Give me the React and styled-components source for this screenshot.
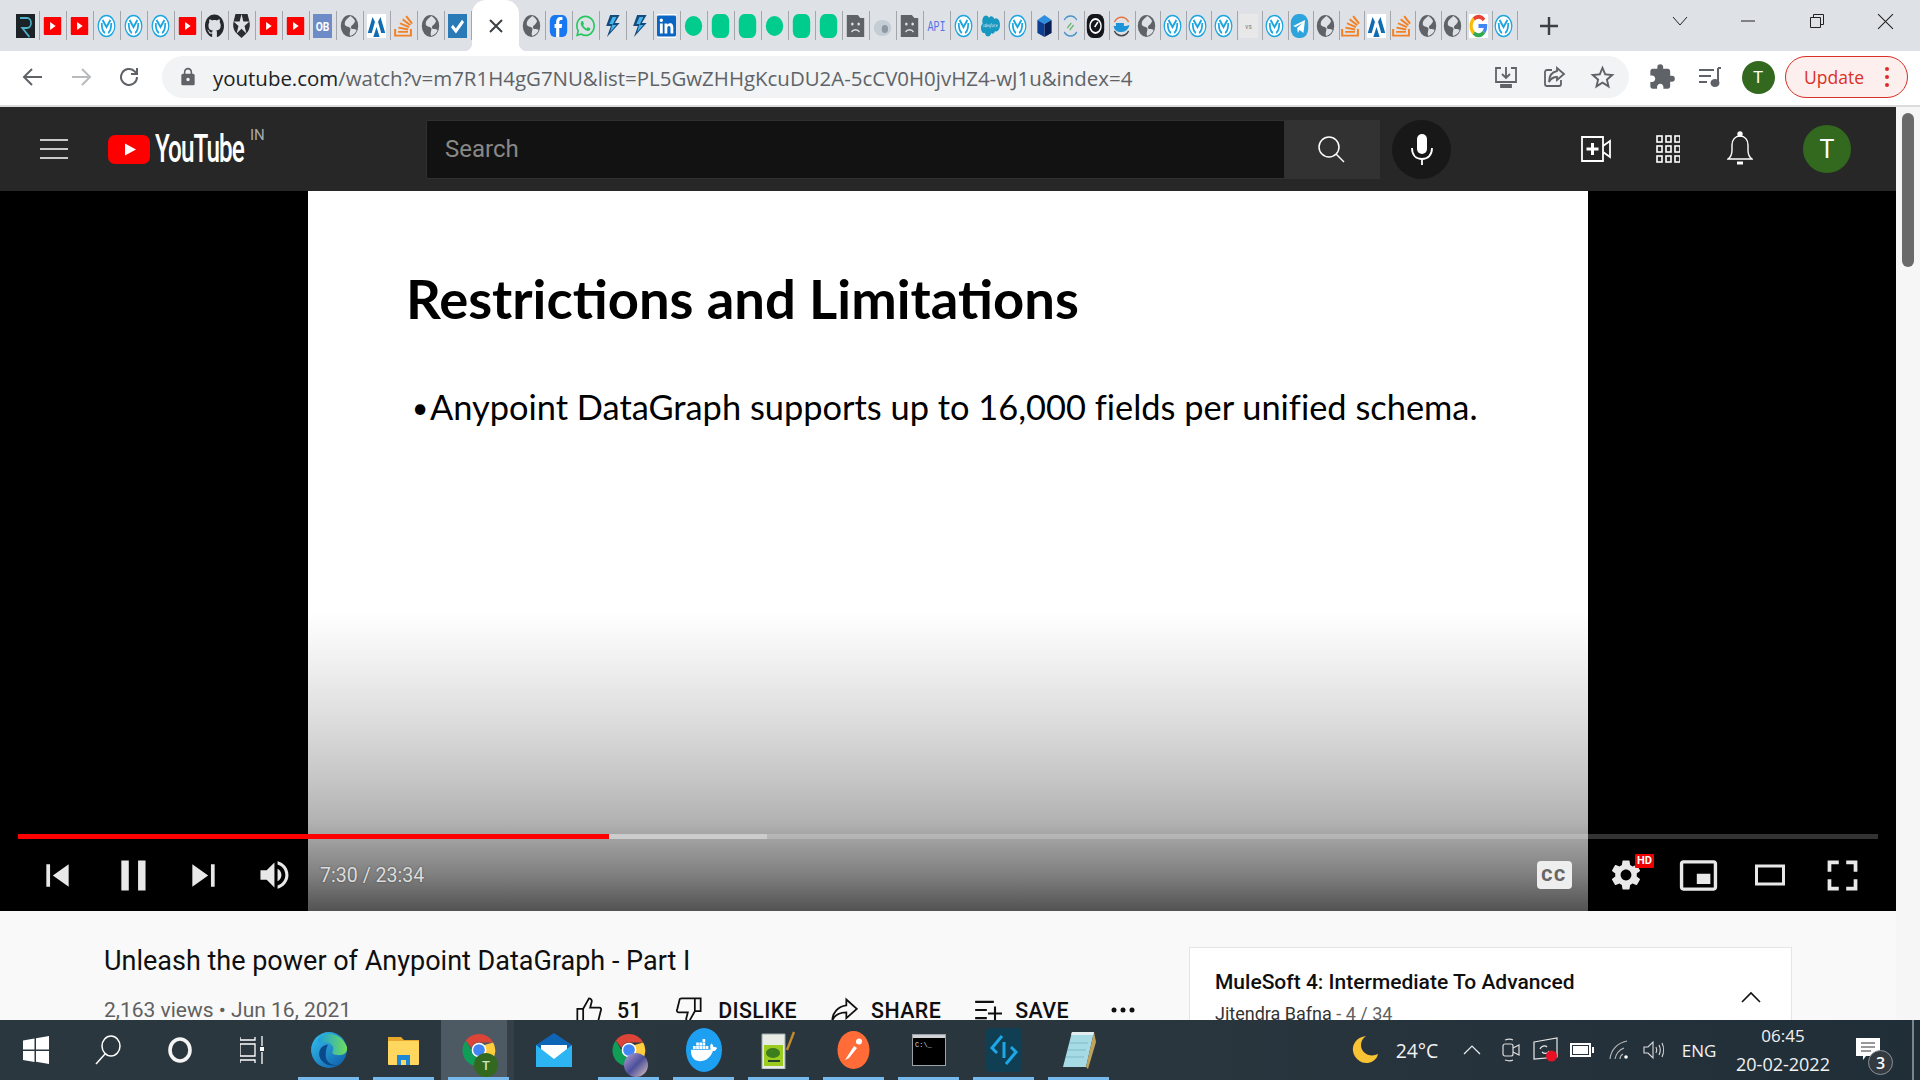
import React from "react";
import styled, { createGlobalStyle } from "styled-components";
import {
  FaGithub,
  FaWhatsapp,
  FaLinkedin,
  FaStackOverflow,
  FaSalesforce,
  FaDocker,
} from "react-icons/fa";
import { SiAuth0 } from "react-icons/si";
import { MdSettings, MdExtension, MdOutlineStarBorder, MdLock } from "react-icons/md";

const GlobalStyle = createGlobalStyle`
  html, body {
    margin: 0;
    padding: 0;
    width: 1920px;
    height: 1080px;
    overflow: hidden;
    font-family: Roboto, "Liberation Sans", sans-serif;
  }
  * { box-sizing: border-box; }
`;

const Page = styled.div`
  width: 1920px;
  height: 1080px;
  display: flex;
  flex-direction: column;
  overflow: hidden;
  background: #f9f9f9;
`;

/* ---- chrome tab strip ---- */
const TabStrip = styled.div`
  height: 51px;
  flex: none;
  display: flex;
  align-items: center;
  padding-left: 13px;
  background: #dee1e6;
`;
const Tab = styled.div`
  width: ${(p) => p.$w}px;
  height: 29px;
  flex: none;
  display: flex;
  align-items: center;
  justify-content: center;
  padding-right: 2px;
  border-right: 1px solid #a3a6aa;
`;
const ActiveTab = styled.div`
  position: relative;
  width: 47px;
  height: 51px;
  flex: none;
  display: flex;
  align-items: center;
  justify-content: center;
  background: #fff;
  border-radius: 14px 14px 0 0;
  color: #3c4043;
  &::before,
  &::after {
    content: "";
    position: absolute;
    bottom: 0;
    width: 8px;
    height: 8px;
  }
  &::before {
    left: -8px;
    background: radial-gradient(circle at 0 0, transparent 8px, #fff 8.5px);
  }
  &::after {
    right: -8px;
    background: radial-gradient(circle at 100% 0, transparent 8px, #fff 8.5px);
  }
`;
const Slot = styled.div`
  width: ${(p) => p.$w}px;
  height: ${(p) => (p.$h ? `${p.$h}px` : "100%")};
  flex: none;
  display: flex;
  align-items: center;
  justify-content: center;
  position: relative;
  margin-left: ${(p) => p.$ml || 0}px;
  color: ${(p) => p.$color || "inherit"};
`;
const WindowControls = styled.div`
  margin-left: auto;
  height: 100%;
  display: flex;
  padding-bottom: 9px;
`;

/* ---- chrome toolbar ---- */
const Toolbar = styled.div`
  height: 56px;
  flex: none;
  display: flex;
  align-items: center;
  padding: 0 12px 2px 9px;
  background: #fff;
  border-bottom: 2px solid #dcdcdc;
  color: #5f6368;
`;
const Omnibox = styled.div`
  width: 1467px;
  height: 42px;
  margin-left: 9px;
  flex: none;
  display: flex;
  align-items: center;
  padding: 0 3px 0 14px;
  border-radius: 21px;
  background: #f1f3f4;
`;
const Url = styled.div`
  flex: 1;
  margin-left: 13px;
  padding-top: 1px;
  font-family: "Open Sans", "Noto Sans", sans-serif;
  font-size: 20.45px;
  white-space: nowrap;
  color: #5f6368;
  b {
    font-weight: 400;
    color: #202124;
  }
`;
const ProfileDot = styled.div`
  width: 33px;
  height: 33px;
  border-radius: 50%;
  background: #33691e;
  color: #fff;
  font-size: 17px;
  display: flex;
  align-items: center;
  justify-content: center;
`;
const UpdatePill = styled.div`
  width: 123px;
  height: 42px;
  margin-left: 3px;
  flex: none;
  display: flex;
  align-items: center;
  padding-left: 18px;
  border: 1.5px solid #d93025;
  border-radius: 21px;
  background: #fcefee;
  color: #d93025;
  font-family: "Open Sans", sans-serif;
  font-size: 17.5px;
`;
const PillDots = styled.div`
  margin-left: auto;
  margin-right: 18px;
  display: flex;
  flex-direction: column;
  gap: 4px;
  i {
    width: 4px;
    height: 4px;
    border-radius: 50%;
    background: #d93025;
  }
`;

/* ---- page viewport ---- */
const Viewport = styled.div`
  flex: 1;
  min-height: 0;
  display: flex;
`;
const Content = styled.div`
  width: 1896px;
  flex: none;
  display: flex;
  flex-direction: column;
`;
const Scrollbar = styled.div`
  flex: 1;
  padding: 6px 6px 0;
  background: #f6f6f6;
  &::before {
    content: "";
    display: block;
    width: 12px;
    height: 154px;
    border-radius: 6px;
    background: #6a6a6a;
  }
`;

/* ---- youtube masthead ---- */
const Masthead = styled.div`
  height: 84px;
  flex: none;
  display: flex;
  align-items: center;
  padding: 0 45px 0 30px;
  background: #272727;
  color: #fff;
`;
const Logo = styled.div`
  width: 318px;
  margin-left: 30px;
  flex: none;
  display: flex;
  align-items: center;
  position: relative;
`;
const LogoWord = styled.span`
  margin-left: 5px;
  font-size: 38px;
  font-weight: 500;
  letter-spacing: -1.5px;
  line-height: 30px;
  transform: scaleX(0.64);
  transform-origin: left center;
`;
const Region = styled.span`
  position: absolute;
  left: 142px;
  top: -8px;
  font-size: 15px;
  color: #aaa;
`;
const SearchBox = styled.div`
  width: 859px;
  height: 59px;
  flex: none;
  display: flex;
  align-items: center;
  padding-left: 18px;
  background: #121212;
  border: 1px solid #303030;
  border-radius: 2px 0 0 2px;
  color: #888;
  font-size: 24px;
`;
const SearchButton = styled.div`
  width: 95px;
  height: 59px;
  flex: none;
  display: flex;
  align-items: center;
  justify-content: center;
  padding-right: 4px;
  background: #323232;
`;
const MicButton = styled.div`
  width: 59px;
  height: 59px;
  margin-left: 12px;
  flex: none;
  display: flex;
  align-items: center;
  justify-content: center;
  border-radius: 50%;
  background: #181818;
`;
const MastheadRight = styled.div`
  margin-left: auto;
  height: 100%;
  display: flex;
  align-items: center;
`;
const Avatar = styled.div`
  width: 48px;
  height: 48px;
  margin-left: 27px;
  border-radius: 50%;
  background: #33691e;
  font-size: 25px;
  display: flex;
  align-items: center;
  justify-content: center;
`;

/* ---- video ---- */
const VideoFrame = styled.div`
  position: relative;
  height: 720px;
  flex: none;
  padding-left: 308px;
  background: #000;
`;
const Slide = styled.div`
  width: 1280px;
  height: 100%;
  padding: 77px 0 0 98px;
  background: #fff;
  color: #000;
  font-family: Lato, "Open Sans", sans-serif;
`;
const SlideTitle = styled.h1`
  margin: 0;
  font-size: 54.4px;
  line-height: 60px;
  font-weight: 700;
`;
const SlideBullet = styled.p`
  margin: 56px 0 0;
  display: flex;
  align-items: center;
  padding-left: 6px;
  font-size: 34.4px;
  line-height: 46px;
  white-space: nowrap;
  font-variant-ligatures: none;
  span {
    width: 18px;
    font-size: 28px;
  }
`;
const PlayerChrome = styled.div`
  position: absolute;
  left: 0;
  right: 0;
  bottom: 0;
  height: 300px;
  display: flex;
  flex-direction: column;
  justify-content: flex-end;
  background: linear-gradient(
    to bottom,
    rgba(0, 0, 0, 0) 0,
    rgba(0, 0, 0, 0.05) 15%,
    rgba(0, 0, 0, 0.13) 35%,
    rgba(0, 0, 0, 0.22) 55%,
    rgba(0, 0, 0, 0.3) 70%,
    rgba(0, 0, 0, 0.5) 88%,
    rgba(0, 0, 0, 0.68) 100%
  );
`;
const ProgressTrack = styled.div`
  position: relative;
  height: 5px;
  margin: 0 18px;
  background: rgba(255, 255, 255, 0.2);
`;
const ProgressFill = styled.div`
  position: absolute;
  left: 0;
  top: 0;
  bottom: 0;
  background: ${(p) => p.$color};
`;
const Controls = styled.div`
  height: 72px;
  padding: 0 18px;
  display: flex;
  align-items: center;
  color: #e8e8e8;
`;
const TimeLabel = styled.span`
  margin-left: 10px;
  font-size: 19.6px;
  color: #ddd;
  text-shadow: 0 0 2px rgba(0, 0, 0, 0.5);
`;
const ControlsRight = styled.div`
  margin-left: auto;
  height: 100%;
  display: flex;
`;
const CcBox = styled.div`
  width: 35px;
  height: 28px;
  border-radius: 4px;
  background: #eee;
  color: #666;
  font-size: 17px;
  font-weight: 900;
  letter-spacing: 1.5px;
  display: flex;
  align-items: center;
  justify-content: center;
`;
const HdBadge = styled.span`
  position: absolute;
  top: 15px;
  left: 45px;
  padding: 0 2px;
  height: 14px;
  line-height: 14px;
  border-radius: 1px;
  background: #e00;
  color: #fff;
  font-size: 11px;
  font-weight: 700;
`;
const VolumeWrap = styled.span`
  display: flex;
  margin-left: 4px;
`;

/* ---- under the video ---- */
const Below = styled.div`
  flex: 1;
  min-height: 0;
  overflow: hidden;
  display: flex;
  background: #f9f9f9;
`;
const Primary = styled.div`
  width: 1189px;
  flex: none;
  padding: 36px 0 0 104px;
`;
const VideoTitle = styled.div`
  font-size: 27px;
  line-height: 28px;
  color: #0f0f0f;
`;
const MetaRow = styled.div`
  margin-top: 21px;
  display: flex;
  align-items: center;
  height: 28px;
`;
const Views = styled.div`
  width: 471px;
  flex: none;
  font-size: 21px;
  color: #606060;
`;
const Actions = styled.div`
  display: flex;
  align-items: center;
  gap: 33px;
  color: #0f0f0f;
`;
const ActionButton = styled.div`
  display: flex;
  align-items: center;
  gap: ${(p) => p.$gap || 13}px;
  font-size: 21.4px;
  font-weight: 500;
  letter-spacing: 0.4px;
  white-space: nowrap;
`;
const PlaylistCard = styled.div`
  width: 603px;
  height: 120px;
  margin-top: 36px;
  padding: 21px 25px;
  position: relative;
  background: #fff;
  border: 1px solid #e5e5e5;
`;
const PlaylistTitle = styled.div`
  font-size: 21px;
  font-weight: 500;
  line-height: 26px;
  color: #0f0f0f;
`;
const PlaylistSub = styled.div`
  margin-top: 7px;
  font-size: 18px;
  line-height: 24px;
  color: #333;
  span {
    color: #606060;
  }
`;
const Collapse = styled.div`
  position: absolute;
  top: 40px;
  left: 551px;
  color: #111;
`;

/* ---- windows taskbar ---- */
const Taskbar = styled.div`
  height: 60px;
  flex: none;
  display: flex;
  align-items: center;
  background: linear-gradient(90deg, #2b373f 0%, #2a363e 60%, #202e38 100%);
  color: #fff;
`;
const Pinned = styled.div`
  display: flex;
  height: 100%;
  margin-left: 3px;
`;
const PinnedSlot = styled.div`
  width: 75px;
  height: 100%;
  flex: none;
  display: flex;
  align-items: center;
  justify-content: center;
  position: relative;
  background: ${(p) =>
    p.$current ? "linear-gradient(90deg, #4d5a63 0 66px, #363f46 66px 73px, transparent 73px)" : "transparent"};
  &::after {
    content: "";
    position: absolute;
    left: 7px;
    bottom: 0;
    width: 61px;
    height: 3px;
    background: ${(p) => (p.$open ? "#76b9ed" : "transparent")};
  }
`;
const Tray = styled.div`
  margin-left: auto;
  height: 100%;
  display: flex;
  align-items: center;
`;
const TrayText = styled.span`
  font-family: "Open Sans", sans-serif;
  font-size: ${(p) => p.$size || 17}px;
  color: #f2f2f2;
  white-space: nowrap;
`;
const Clock = styled.div`
  display: flex;
  flex-direction: column;
  align-items: center;
  gap: 4px;
  line-height: 24px;
`;
const NotifyBadge = styled.span`
  position: absolute;
  left: 29px;
  top: 30px;
  width: 25px;
  height: 25px;
  border-radius: 50%;
  background: #333a40;
  border: 1px solid #8a9197;
  color: #fff;
  font-family: "Open Sans", sans-serif;
  font-size: 16px;
  font-weight: 600;
  display: flex;
  align-items: center;
  justify-content: center;
`;
const TrayEnd = styled.div`
  width: 19px;
  height: 100%;
  &::after {
    content: "";
    display: block;
    width: 2px;
    height: 100%;
    margin-left: 11px;
    background: #7b858c;
  }
`;

/* ---- favicons, all squeezed like the small tab icons in the capture ---- */
const Fav = ({ children }) => (
  <svg width="19" height="24" viewBox="0 0 24 24" preserveAspectRatio="none">
    {children}
  </svg>
);
const Brand = ({ icon: I, color, bg }) => (
  <I
    size={20}
    color={color}
    style={bg ? { background: bg, width: 19, height: 24 } : { width: 19, height: 24 }}
    preserveAspectRatio="none"
  />
);

function Favicon({ type }) {
  switch (type) {
    case "r":
      return (
        <Fav>
          <rect width="24" height="24" fill="#1b2326" />
          <path d="M5 4h9a5 5 0 010 10H8l9 9M5 4v0" fill="none" stroke="#4fb2c9" strokeWidth="2" />
        </Fav>
      );
    case "yt":
      return (
        <Fav>
          <rect x="1" y="3" width="22" height="18" rx="1" fill="#f00" />
          <path d="M9 8l7 4-7 4z" fill="#fff" />
        </Fav>
      );
    case "mule":
      return (
        <Fav>
          <circle cx="12" cy="12" r="10.5" fill="#fff" stroke="#1ea6e0" strokeWidth="1.6" />
          <path d="M6 9c0 6 2 9 4 10M18 9c0 6-2 9-4 10M7 6l5 7 5-7" fill="none" stroke="#1ea6e0" strokeWidth="2.2" />
        </Fav>
      );
    case "gh":
      return <Brand icon={FaGithub} color="#24292e" />;
    case "auth0":
      return <Brand icon={SiAuth0} color="#2b2b33" />;
    case "ob":
      return (
        <Fav>
          <rect width="24" height="24" fill="#6d8cc7" />
          <text x="12" y="17" fontSize="13" fontWeight="700" fill="#fff" textAnchor="middle" fontFamily="Roboto">OB</text>
        </Fav>
      );
    case "globe":
      return (
        <Fav>
          <circle cx="12" cy="12" r="11" fill="#5f6368" />
          <path d="M13 2c-4 3-7 4-7 8 0 3 5 2 7 4 1 2-2 5 0 8 4-1 7-3 8-6-3-2-6 0-7-2-1-3 4-3 5-7-2-3-4-4-6-5z" fill="#dee1e6" />
        </Fav>
      );
    case "mt":
      return (
        <Fav>
          <rect width="24" height="24" fill="#fff" />
          <path d="M1 19L7 3l5 8 5-8 6 16h-5L14 8l-2 3-2-3-4 11z" fill="#0f6cb3" />
          <path d="M12 13l4 10H8z" fill="#0f6cb3" />
        </Fav>
      );
    case "so":
      return <Brand icon={FaStackOverflow} color="#f48024" />;
    case "check":
      return (
        <Fav>
          <rect width="24" height="24" fill="#2a7ab8" />
          <path d="M5 12l5 5 9-10" fill="none" stroke="#fff" strokeWidth="3.4" />
        </Fav>
      );
    case "fb":
      return (
        <Fav>
          <rect x="1" y="1" width="22" height="22" rx="6" fill="#1778f2" />
          <path d="M13 23v-9h3l.6-4H13V8c0-1 .5-2 2-2h2V3h-3c-3 0-5 2-5 5v2H7v4h2v9z" fill="#fff" />
        </Fav>
      );
    case "wa":
      return <Brand icon={FaWhatsapp} color="#25c75f" />;
    case "bolt":
      return (
        <Fav>
          <path d="M9 1h12l-6 8h6L5 23l5-11H4z" fill="#16497c" />
          <path d="M12 3h5l-5 8h5L9 18l3-8H8z" fill="#44b4ea" />
        </Fav>
      );
    case "li":
      return <Brand icon={FaLinkedin} color="#0a66c2" bg="#fff" />;
    case "dot":
      return (
        <Fav>
          <ellipse cx="12" cy="12" rx="11" ry="10" fill="#00cc8e" />
        </Fav>
      );
    case "pill":
      return (
        <Fav>
          <rect x="1" y="0" width="22" height="24" rx="7" fill="#00cc8e" />
        </Fav>
      );
    case "sad":
      return (
        <Fav>
          <path d="M1 1h14l3 3h5v19H1z" fill="#5f6368" />
          <circle cx="8" cy="10" r="1.6" fill="#dee1e6" />
          <circle cx="16" cy="10" r="1.6" fill="#dee1e6" />
          <path d="M7 18c2-3 8-3 10 0" stroke="#dee1e6" strokeWidth="1.6" fill="none" />
        </Fav>
      );
    case "img":
      return (
        <Fav>
          <ellipse cx="12" cy="14" rx="11" ry="8" fill="#c4ccd4" />
          <circle cx="15" cy="15" r="4" fill="#8d98a3" />
        </Fav>
      );
    case "api":
      return (
        <Fav>
          <text x="12" y="17" fontSize="14" fontWeight="500" fill="#5577e6" textAnchor="middle" fontFamily="Liberation Mono" textLength="23" lengthAdjust="spacingAndGlyphs">API</text>
        </Fav>
      );
    case "sf":
      return <Brand icon={FaSalesforce} color="#1798c1" />;
    case "cube":
      return (
        <Fav>
          <path d="M3 6l9-5 9 5-9 4z" fill="#2d8fe0" />
          <path d="M3 6l9 4v13l-9-4z" fill="#0b3f94" />
          <path d="M21 6l-9 4v13l9-4z" fill="#0a1e56" />
        </Fav>
      );
    case "s":
      return (
        <Fav>
          <path d="M20 6a10 10 0 00-16 0M4 18a10 10 0 0016 0" fill="none" stroke="#4a93c8" strokeWidth="1.5" />
          <path d="M8 14l5-5M11 16l5-5" stroke="#63b56b" strokeWidth="1.6" />
        </Fav>
      );
    case "gauge":
      return (
        <Fav>
          <rect x="1" y="0" width="22" height="24" rx="8" fill="#14161c" />
          <circle cx="12" cy="12" r="7" fill="none" stroke="#fff" strokeWidth="1.8" />
          <path d="M11 13l4-5" stroke="#fff" strokeWidth="2" />
        </Fav>
      );
    case "docker":
      return (
        <Fav>
          <path d="M3 8a11 11 0 0118 0" fill="none" stroke="#e8743b" strokeWidth="1.6" />
          <path d="M3 17a11 11 0 0018 0" fill="none" stroke="#444" strokeWidth="1.6" />
          <path d="M2 12h16c1 0 3-1 4-1-1 4-5 7-10 7-6 0-9-2-10-6zM5 9h10v3H5z" fill="#1d93d8" />
        </Fav>
      );
    case "vs":
      return (
        <Fav>
          <rect width="24" height="24" fill="#e8e8e8" />
          <text x="12" y="15" fontSize="8" fill="#777" textAnchor="middle" fontFamily="Roboto">vs</text>
        </Fav>
      );
    case "tg":
      return (
        <Fav>
          <rect x="1" y="0" width="22" height="24" rx="9" fill="#2ea4dd" />
          <path d="M4 12l15-6-2 13-5-3-2 3-1-5 7-5-9 4z" fill="#fff" />
        </Fav>
      );
    case "g":
      return (
        <Fav>
          <rect width="24" height="24" fill="#fff" />
          <path d="M19 6a9 9 0 00-13-1" fill="none" stroke="#ea4335" strokeWidth="4" />
          <path d="M6 5a9 9 0 000 14" fill="none" stroke="#fbbc05" strokeWidth="4" />
          <path d="M6 19a9 9 0 0013-1" fill="none" stroke="#34a853" strokeWidth="4" />
          <path d="M12 12h9a9 9 0 01-2 6" fill="none" stroke="#4285f4" strokeWidth="4" />
        </Fav>
      );
    default:
      return null;
  }
}

const leftTabs = "r yt yt mule mule mule yt gh auth0 yt yt ob globe mt so globe check".split(" ");
const wideTabs = "globe fb wa bolt bolt li dot pill pill dot pill pill sad img sad api mule sf mule cube".split(" ");
const narrowTabs = "s gauge docker globe mule mule mule vs mule tg globe so mt so globe globe g mule".split(" ");

/* ---- toolbar and masthead drawings ---- */
const Icon = ({ size = 24, w, h, view = "0 0 24 24", children, stroke, sw = 2, fill = "none" }) => (
  <svg width={w || size} height={h || size} viewBox={view} fill={fill} stroke={stroke} strokeWidth={sw}>
    {children}
  </svg>
);

const YtIcon = ({ size = 67, d }) => (
  <svg width={size} height={size} viewBox="0 0 36 36" fill="currentColor" fillRule="evenodd">
    {[].concat(d).map((p) => (
      <path key={p} d={p} />
    ))}
  </svg>
);

const ytPaths = {
  prev: "m 12,12 h 2 v 12 h -2 z m 3.5,6 8.5,6 V 12 z",
  next: "M 12,24 20.5,18 12,12 V 24 z M 22,12 v 12 h 2 V 12 h -2 z",
  pause: "M 12,26 16,26 16,10 12,10 z M 21,26 25,26 25,10 21,10 z",
  volume:
    "M8,21 L12,21 L17,26 L17,10 L12,15 L8,15 L8,21 Z M19,14 L19,22 C20.48,21.32 21.5,19.77 21.5,18 C21.5,16.26 20.48,14.74 19,14 ZM19,11.29 C21.89,12.15 24,14.83 24,18 C24,21.17 21.89,23.85 19,24.71 L19,26.77 C23.01,25.86 26,22.28 26,18 C26,13.72 23.01,10.14 19,9.23 L19,11.29 Z",
  mini: "M25,17 L17,17 L17,23 L25,23 L25,17 Z M29,25 L29,10.98 C29,9.88 28.1,9 27,9 L9,9 C7.9,9 7,9.88 7,10.98 L7,25 C7,26.1 7.9,27 9,27 L27,27 C28.1,27 29,26.1 29,25 Z M27,25.02 L9,25.02 L9,10.97 L27,10.97 L27,25.02 Z",
  theater: "m 28,11 0,14 -20,0 0,-14 z m -18,2 16,0 0,10 -16,0 0,-10 z",
  full: [
    "m 10,16 2,0 0,-4 4,0 0,-2 L 10,10 z",
    "m 20,10 0,2 4,0 0,4 2,0 L 26,10 z",
    "m 24,24 -4,0 0,2 L 26,26 l 0,-6 -2,0 z",
    "M 12,20 10,20 10,26 l 6,0 0,-2 -4,0 z",
  ],
};

const ChromeLogo = ({ size = 36 }) => (
  <svg width={size} height={size} viewBox="0 0 36 36">
    <path d="M18 1a17 17 0 0115 9H18a8 8 0 00-8 6L4 8a17 17 0 0114-7z" fill="#db4437" />
    <path d="M4 8l7 12a8 8 0 009 6l-6 9A17 17 0 014 8z" fill="#0f9d58" />
    <path d="M33 10a17 17 0 01-19 25l6-9a8 8 0 003-13z" fill="#ffcd40" />
    <circle cx="18" cy="18" r="7" fill="#4285f4" stroke="#fff" strokeWidth="1.6" />
  </svg>
);

const TaskbarBadge = styled.span`
  position: absolute;
  left: 33px;
  top: 33px;
  width: 24px;
  height: 24px;
  border-radius: 50%;
  background: ${(p) => p.$bg};
  color: #cfe3c2;
  font-size: 13px;
  font-weight: 500;
  display: flex;
  align-items: center;
  justify-content: center;
`;

const pinned = [
  {
    key: "edge",
    open: true,
    node: (
      <svg width="38" height="44" viewBox="0 0 36 36">
        <defs>
          <linearGradient id="edgeA" x1="0" y1="0" x2="1" y2="1">
            <stop offset="0" stopColor="#35c1f1" />
            <stop offset="1" stopColor="#0c59a4" />
          </linearGradient>
          <linearGradient id="edgeB" x1="0" y1="0" x2="1" y2="0">
            <stop offset="0" stopColor="#1b9de2" />
            <stop offset="1" stopColor="#6fdc5a" />
          </linearGradient>
        </defs>
        <circle cx="18" cy="18" r="17" fill="url(#edgeA)" />
        <path d="M7 9C12 0 29 0 35 15c1 6-3 8-8 8-3 0-6-1-6-3 3-3 0-9-6-9-4 0-7 1-8-2z" fill="url(#edgeB)" />
        <path d="M17 13c-7 0-11 8-6 15 3 4 9 6 15 4-8 1-12-5-11-11 0-3 1-6 2-8z" fill="#0a4a8a" />
      </svg>
    ),
  },
  {
    key: "explorer",
    open: true,
    node: (
      <svg width="33" height="33" viewBox="0 0 33 33">
        <path d="M1 3h13l3 3h15v6H1z" fill="#e8a92c" />
        <rect x="1" y="7" width="31" height="24" rx="1" fill="#ffd75e" />
        <path d="M10 21h13v10h-4v-5h-5v5h-4z" fill="#1e88d8" />
      </svg>
    ),
  },
  {
    key: "chrome",
    open: true,
    current: true,
    node: (
      <>
        <ChromeLogo size={34} />
        <TaskbarBadge $bg="#33691e">T</TaskbarBadge>
      </>
    ),
  },
  {
    key: "mail",
    open: false,
    node: (
      <svg width="36" height="34" viewBox="0 0 36 34">
        <path d="M0 12L18 0l18 12v22H0z" fill="#0f65b5" />
        <path d="M5 12h26v10L18 28 5 22z" fill="#fff" />
        <path d="M0 12l18 14 18-14v22H0z" fill="#2cb5f2" />
      </svg>
    ),
  },
  {
    key: "chrome-2",
    open: true,
    node: (
      <>
        <ChromeLogo size={34} />
        <TaskbarBadge $bg="linear-gradient(135deg,#b9a2d8,#4b4f9a 50%,#e2c7c0)" />
      </>
    ),
  },
  {
    key: "docker",
    open: true,
    node: (
      <svg width="36" height="44" viewBox="0 0 36 36" preserveAspectRatio="none">
        <circle cx="18" cy="18" r="18" fill="#1d9ff2" />
        <FaDocker size={26} x="5" y="5" color="#fff" />
      </svg>
    ),
  },
  {
    key: "npp",
    open: true,
    node: (
      <svg width="36" height="38" viewBox="0 0 36 38">
        <path d="M1 3h23v35H1z" fill="#e9ece4" stroke="#9aa" strokeWidth="1" />
        <rect x="3" y="14" width="19" height="21" fill="#9ccc1e" />
        <ellipse cx="12" cy="22" rx="7" ry="5" fill="#3c7d1d" />
        <path d="M7 30h12" stroke="#243" strokeWidth="2" />
        <path d="M33 1l-7 18" stroke="#c38a2b" strokeWidth="2.4" />
      </svg>
    ),
  },
  {
    key: "postman",
    open: true,
    node: (
      <svg width="33" height="38" viewBox="0 0 33 38" preserveAspectRatio="none">
        <ellipse cx="16.5" cy="19" rx="16" ry="19" fill="#ff6c37" />
        <path d="M8 29l9-14 3 2-8 10zM19 10a3 3 0 116 1 3 3 0 01-6-1z" fill="#fff" />
      </svg>
    ),
  },
  {
    key: "cmd",
    open: true,
    node: (
      <svg width="34" height="32" viewBox="0 0 34 32">
        <rect x="0.5" y="0.5" width="33" height="31" fill="#000" stroke="#9ba2a8" />
        <rect x="1" y="1" width="32" height="3" fill="#cfd3d6" />
        <text x="3" y="13" fontSize="7" fill="#ddd" fontFamily="Liberation Mono">C:\_</text>
      </svg>
    ),
  },
  {
    key: "switch",
    open: true,
    node: (
      <svg width="36" height="44" viewBox="0 0 36 44">
        <rect width="36" height="44" rx="4" fill="#103f54" />
        <path d="M16 8L6 20l5 5M20 36l10-12-5-5M18 14v16" fill="none" stroke="#1ca7e6" strokeWidth="3" />
      </svg>
    ),
  },
  {
    key: "notepad",
    open: true,
    node: (
      <svg width="34" height="38" viewBox="0 0 34 38">
        <path d="M10 1h22l-8 35H1z" fill="#a6dbe6" />
        <path d="M10 1h22v3H9z" fill="#e4eef1" />
        <path d="M32 1l2 10-8 27-2-2z" fill="#c0a35a" />
        <path d="M8 12h18M6 19h18M4 26h18" stroke="#7fb9c6" />
      </svg>
    ),
  },
];

export default function App() {
  return (
    <Page>
      <GlobalStyle />

      <TabStrip>
        {leftTabs.map((t, i) => (
          <Tab key={`l${i}`} $w={27}>
            <Favicon type={t} />
          </Tab>
        ))}
        <ActiveTab>
          <Icon size={16} view="0 0 16 16" stroke="currentColor" sw={2}>
            <path d="M2 2l12 12M14 2L2 14" />
          </Icon>
        </ActiveTab>
        {wideTabs.map((t, i) => (
          <Tab key={`w${i}`} $w={27}>
            <Favicon type={t} />
          </Tab>
        ))}
        {narrowTabs.map((t, i) => (
          <Tab key={`n${i}`} $w={25.5}>
            <Favicon type={t} />
          </Tab>
        ))}
        <Slot $w={62} $color="#3c4043">
          <Icon size={18} view="0 0 18 18" stroke="currentColor" sw={2.4}>
            <path d="M9 0v18M0 9h18" />
          </Icon>
        </Slot>
        <WindowControls>
          <Slot $w={66} $color="#222">
            <Icon size={16} view="0 0 16 16" stroke="currentColor" sw={1}>
              <path d="M1 4l7 8 7-8" />
            </Icon>
          </Slot>
          <Slot $w={69} $color="#222">
            <Icon size={16} view="0 0 16 16" stroke="currentColor" sw={1}>
              <path d="M1 8h14" />
            </Icon>
          </Slot>
          <Slot $w={69} $color="#222">
            <Icon size={16} view="0 0 16 16" stroke="currentColor" sw={1}>
              <path d="M1.5 4.5h10v10h-10zM4.5 4.5v-3h10v10h-3" />
            </Icon>
          </Slot>
          <Slot $w={69} $color="#222">
            <Icon size={17} view="0 0 16 16" stroke="currentColor" sw={1}>
              <path d="M1 1l14 14M15 1L1 15" />
            </Icon>
          </Slot>
        </WindowControls>
      </TabStrip>

      <Toolbar>
        <Slot $w={48}>
          <Icon view="0 0 24 24" stroke="currentColor" sw={2}>
            <path d="M21 12H4M11 4l-8 8 8 8" />
          </Icon>
        </Slot>
        <Slot $w={48} $color="#b8babd">
          <Icon view="0 0 24 24" stroke="currentColor" sw={2}>
            <path d="M3 12h17M13 4l8 8-8 8" />
          </Icon>
        </Slot>
        <Slot $w={48}>
          <Icon view="0 0 24 24" stroke="currentColor" sw={2}>
            <path d="M20 12a8 8 0 11-2.5-5.8L20 9M20 3v6h-6" />
          </Icon>
        </Slot>
        <Omnibox>
          <Slot $w={24} $h={24}>
            <MdLock size={20} />
          </Slot>
          <Url>
            <b>youtube.com</b>/watch?v=m7R1H4gG7NU&amp;list=PL5GwZHHgKcuDU2A-5cCV0H0jvHZ4-wJ1u&amp;index=4
          </Url>
          <Slot $w={48} $h={30}>
            <Icon view="0 0 24 24" stroke="currentColor" sw={1.8}>
              <path d="M7 3H2v14h20V3h-5M12 2v10M8 9l4 4 4-4" />
              <path d="M7 20h10v2H7z" fill="currentColor" />
            </Icon>
          </Slot>
          <Slot $w={48} $h={30}>
            <Icon view="0 0 24 24" stroke="currentColor" sw={1.8}>
              <path d="M10 5H5a2 2 0 00-2 2v12a2 2 0 002 2h12a2 2 0 002-2v-4" />
              <path d="M15 3l7 6-7 6v-3c-4 0-6 1-8 5 0-6 3-10 8-11z" />
            </Icon>
          </Slot>
          <Slot $w={48} $h={30}>
            <MdOutlineStarBorder size={29} />
          </Slot>
        </Omnibox>
        <Slot $w={48} $ml={9}>
          <MdExtension size={28} />
        </Slot>
        <Slot $w={48}>
          <Icon view="0 0 24 24" stroke="currentColor" sw={2}>
            <path d="M1 5h15M1 11h12M1 17h8M20 3v14" />
            <ellipse cx="17" cy="18" rx="3.5" ry="3" fill="currentColor" />
            <path d="M20 3h3" />
          </Icon>
        </Slot>
        <Slot $w={48}>
          <ProfileDot>T</ProfileDot>
        </Slot>
        <UpdatePill>
          Update
          <PillDots>
            <i />
            <i />
            <i />
          </PillDots>
        </UpdatePill>
      </Toolbar>

      <Viewport>
        <Content>
          <Masthead>
            <Slot $w={48}>
              <Icon w={28} h={22} view="0 0 28 22" stroke="#fff" sw={1.3}>
                <path d="M0 2h28M0 11h28M0 20h28" />
              </Icon>
            </Slot>
            <Logo>
              <svg width="42" height="29" viewBox="0 0 42 29">
                <rect width="42" height="29" rx="7" fill="#f00" />
                <path d="M17 8.5l11 6-11 6z" fill="#fff" />
              </svg>
              <LogoWord>YouTube</LogoWord>
              <Region>IN</Region>
            </Logo>
            <SearchBox>Search</SearchBox>
            <SearchButton>
              <Icon w={28} h={28} view="0 0 28 28" stroke="#fff" sw={1.5}>
                <circle cx="12" cy="12" r="10" />
                <path d="M19 19l8 8" />
              </Icon>
            </SearchButton>
            <MicButton>
              <Icon w={24} h={32} view="0 0 24 32" stroke="#fff" sw={1.8}>
                <rect x="7" y="1" width="10" height="20" rx="5" fill="#fff" stroke="none" />
                <path d="M2 15c0 7 4 11 10 11s10-4 10-11M12 26v6" />
              </Icon>
            </MicButton>
            <MastheadRight>
              <Slot $w={72}>
                <Icon w={30} h={26} view="0 0 30 26" stroke="#fff" sw={1.8}>
                  <path d="M1 1h21v24H1zM22 10l7-5v16l-7-5" />
                  <path d="M11.5 7v12M5.5 13h12" strokeWidth="3" />
                </Icon>
              </Slot>
              <Slot $w={72}>
                <Icon w={24} h={28} view="0 0 24 28" stroke="#fff" sw={1.6}>
                  {[0, 1, 2].map((r) =>
                    [0, 1, 2].map((c) => (
                      <rect key={`${r}${c}`} x={1 + c * 9} y={1 + r * 10} width="5" height="6" />
                    ))
                  )}
                </Icon>
              </Slot>
              <Slot $w={72}>
                <Icon w={26} h={36} view="0 0 26 36" stroke="#fff" sw={1.4}>
                  <path d="M1 28c3-2 4-5 4-9V14c0-5 3-9 8-9s8 4 8 9v5c0 4 1 7 4 9z" />
                  <circle cx="13" cy="3" r="2" fill="#fff" />
                  <path d="M10 32h6" strokeWidth="3" />
                </Icon>
              </Slot>
              <Avatar>T</Avatar>
            </MastheadRight>
          </Masthead>

          <VideoFrame>
            <Slide>
              <SlideTitle>Restrictions and Limitations</SlideTitle>
              <SlideBullet>
                <span>•</span>Anypoint DataGraph supports up to 16,000 fields per unified schema.
              </SlideBullet>
            </Slide>
            <PlayerChrome>
              <ProgressTrack>
                <ProgressFill $color="#ccc" style={{ width: 749 }} />
                <ProgressFill $color="#f00" style={{ width: 591 }} />
              </ProgressTrack>
              <Controls>
                <Slot $w={78}>
                  <YtIcon d={ytPaths.prev} />
                </Slot>
                <Slot $w={72}>
                  <YtIcon d={ytPaths.pause} />
                </Slot>
                <Slot $w={70}>
                  <YtIcon d={ytPaths.next} />
                </Slot>
                <Slot $w={72}>
                  <VolumeWrap>
                    <YtIcon size={56} d={ytPaths.volume} />
                  </VolumeWrap>
                </Slot>
                <TimeLabel>7:30 / 23:34</TimeLabel>
                <ControlsRight>
                  <Slot $w={72}>
                    <CcBox>CC</CcBox>
                  </Slot>
                  <Slot $w={72}>
                    <MdSettings size={36} />
                    <HdBadge>HD</HdBadge>
                  </Slot>
                  <Slot $w={72}>
                    <YtIcon size={61} d={ytPaths.mini} />
                  </Slot>
                  <Slot $w={72}>
                    <YtIcon size={54} d={ytPaths.theater} />
                  </Slot>
                  <Slot $w={72}>
                    <YtIcon d={ytPaths.full} />
                  </Slot>
                </ControlsRight>
              </Controls>
            </PlayerChrome>
          </VideoFrame>

          <Below>
            <Primary>
              <VideoTitle>Unleash the power of Anypoint DataGraph - Part I</VideoTitle>
              <MetaRow>
                <Views>2,163 views • Jun 16, 2021</Views>
                <Actions>
                  <ActionButton $gap={14}>
                    <Icon size={28} stroke="currentColor" sw={1.5}>
                      <path d="M7 22V11l5-9c2 0 3 2 2 4l-1 4h8c1 0 2 1 1 3l-2 8c0 1-1 1-2 1zM7 11H2v11h5" />
                    </Icon>
                    51
                  </ActionButton>
                  <ActionButton $gap={15}>
                    <Icon size={28} stroke="currentColor" sw={1.5}>
                      <path d="M17 2v11l-5 9c-2 0-3-2-2-4l1-4H3c-1 0-2-1-1-3l2-8c0-1 1-1 2-1zM17 13h5V2h-5" />
                    </Icon>
                    DISLIKE
                  </ActionButton>
                  <ActionButton>
                    <Icon size={28} stroke="currentColor" sw={1.5}>
                      <path d="M14 3l9 8-9 8v-5c-6 0-10 2-12 7 0-7 5-12 12-13z" />
                    </Icon>
                    SHARE
                  </ActionButton>
                  <ActionButton>
                    <Icon size={28} stroke="currentColor" sw={1.8}>
                      <path d="M1 5h16M1 12h10M1 19h10M18 9v12M12 15h12" />
                    </Icon>
                    SAVE
                  </ActionButton>
                  <Slot $w={28} $h={10} $ml={7}>
                    <Icon w={28} h={10} view="0 0 28 10" fill="currentColor">
                      <circle cx="5" cy="5" r="2.5" />
                      <circle cx="14" cy="5" r="2.5" />
                      <circle cx="23" cy="5" r="2.5" />
                    </Icon>
                  </Slot>
                </Actions>
              </MetaRow>
            </Primary>
            <PlaylistCard>
              <PlaylistTitle>MuleSoft 4: Intermediate To Advanced</PlaylistTitle>
              <PlaylistSub>
                Jitendra Bafna<span> - 4 / 34</span>
              </PlaylistSub>
              <Collapse>
                <Icon w={20} h={12} view="0 0 20 12" stroke="currentColor" sw={1.6}>
                  <path d="M1 11l9-9 9 9" />
                </Icon>
              </Collapse>
            </PlaylistCard>
          </Below>
        </Content>
        <Scrollbar />
      </Viewport>

      <Taskbar>
        <Slot $w={72}>
          <svg width="26" height="28" viewBox="0 0 26 28" fill="#fff">
            <path d="M0 4.5l11.5-2v11H0zM13 2.2L26 0v13.500H13zM0 15h11.500v11L0 24zM13 15h13v13l-13-2.200z" />
          </svg>
        </Slot>
        <Slot $w={72}>
          <svg width="26" height="30" viewBox="0 0 26 30" fill="none" stroke="#fff" strokeWidth="1.5">
            <ellipse cx="16" cy="11" rx="9" ry="10" />
            <path d="M10 19L1 29" />
          </svg>
        </Slot>
        <Slot $w={72}>
          <svg width="24" height="28" viewBox="0 0 24 28" fill="none" stroke="#f5f5f5" strokeWidth="3.6">
            <ellipse cx="12" cy="14" rx="10" ry="11" />
          </svg>
        </Slot>
        <Slot $w={72}>
          <svg width="24" height="28" viewBox="0 0 24 28" fill="none" stroke="#fff" strokeWidth="1.3">
            <path d="M0 1v3h15V1M0 8h15v12H0zM0 27v-3h15v3M22 0v10M22 16v12" />
            <rect x="20" y="11" width="4" height="4" fill="#fff" stroke="none" />
          </svg>
        </Slot>
        <Pinned>
          {pinned.map((p) => (
            <PinnedSlot key={p.key} $open={p.open} $current={p.current}>
              {p.node}
            </PinnedSlot>
          ))}
        </Pinned>
        <Tray>
          <Slot $w={40}>
            <svg width="28" height="30" viewBox="0 0 28 30">
              <path d="M15 1c-9 1-14 8-13 15s8 13 15 12c5-1 9-4 10-9-8 4-17-1-17-9 0-4 2-7 5-9z" fill="#f8c433" />
            </svg>
          </Slot>
          <Slot $w={64}>
            <TrayText $size={19.4}>24°C</TrayText>
          </Slot>
          <Slot $w={45}>
            <svg width="18" height="10" viewBox="0 0 18 10" fill="none" stroke="#eee" strokeWidth="1.2">
              <path d="M1 9l8-8 8 8" />
            </svg>
          </Slot>
          <Slot $w={34}>
            <svg width="18" height="24" viewBox="0 0 18 24" fill="none" stroke="#ddd" strokeWidth="1.2">
              <rect x="1" y="6" width="10" height="12" rx="2" />
              <path d="M11 10l6-3v10l-6-3M3 2c3-1 6-1 8 0M3 22c3 1 6 1 8 0" />
            </svg>
          </Slot>
          <Slot $w={36}>
            <svg width="26" height="26" viewBox="0 0 26 26" fill="none" stroke="#e8e8e8" strokeWidth="1.2">
              <path d="M1 5l23-4v19L1 22zM7 12c1-3 5-4 7-2M16 14c-1 3-5 3-7 1" />
              <circle cx="18.500" cy="19" r="5.500" fill="#e81123" stroke="none" />
            </svg>
          </Slot>
          <Slot $w={36}>
            <svg width="24" height="14" viewBox="0 0 24 14" fill="#fff">
              <path fillRule="evenodd" d="M0 0h21v14H0zM2 2v10h17V2z" />
              <rect x="3" y="3" width="15" height="8" />
              <rect x="22" y="4" width="2" height="6" />
            </svg>
          </Slot>
          <Slot $w={37}>
            <svg width="20" height="20" viewBox="0 0 20 20" fill="none" stroke="#bbb" strokeWidth="1.1">
              <path d="M1 19C2 10 8 3 18 1M6 19c1-5 4-9 9-11M11 19c0-2 1-4 3-5" />
              <circle cx="17" cy="17" r="1.800" fill="#fff" stroke="none" />
            </svg>
          </Slot>
          <Slot $w={34}>
            <svg width="23" height="20" viewBox="0 0 23 20" fill="none" stroke="#ddd" strokeWidth="1.1">
              <path d="M1 7h4l5-5v16l-5-5H1zM13 7c1 2 1 4 0 6M16 5c1.500 3 1.500 7 0 10M19 3c2 4 2 10 0 14" />
            </svg>
          </Slot>
          <Slot $w={56}>
            <TrayText>ENG</TrayText>
          </Slot>
          <Slot $w={112}>
            <Clock>
              <TrayText>06:45</TrayText>
              <TrayText $size={18}>20-02-2022</TrayText>
            </Clock>
          </Slot>
          <Slot $w={62}>
            <svg width="24" height="24" viewBox="0 0 24 24" style={{ marginTop: -2, marginRight: 4 }}>
              <path d="M0 1h24v18H10l-3 4v-4H0z" fill="#fff" />
              <path d="M5 6h14M5 10h14M5 14h10" stroke="#333" strokeWidth="1" />
            </svg>
            <NotifyBadge>3</NotifyBadge>
          </Slot>
          <TrayEnd />
        </Tray>
      </Taskbar>
    </Page>
  );
}
